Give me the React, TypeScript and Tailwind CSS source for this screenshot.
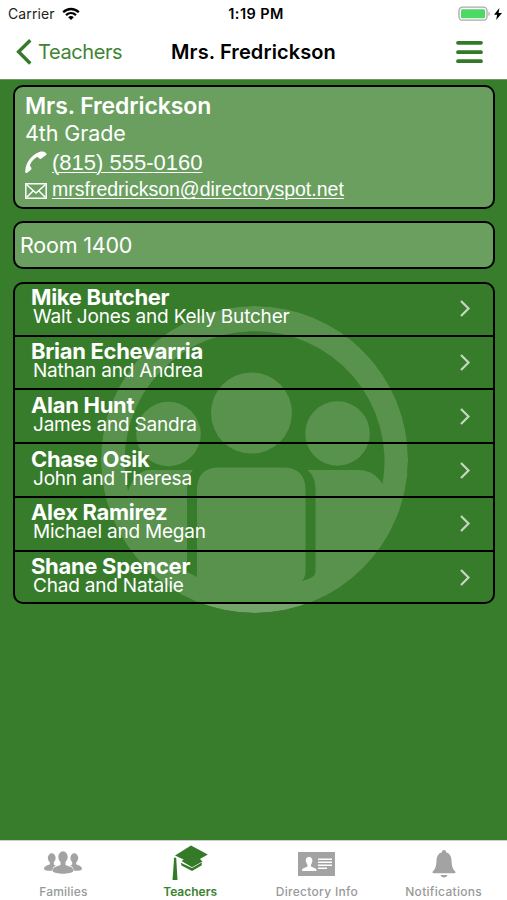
import React from "react";

const families = [
  { name: "Mike Butcher", parents: "Walt Jones and Kelly Butcher" },
  { name: "Brian Echevarria", parents: "Nathan and Andrea" },
  { name: "Alan Hunt", parents: "James and Sandra" },
  { name: "Chase Osik", parents: "John and Theresa" },
  { name: "Alex Ramirez", parents: "Michael and Megan" },
  { name: "Shane Spencer", parents: "Chad and Natalie" },
];

const StatusBar = () => (
  <div className="flex h-[27px] items-center pl-2 pr-[5px] text-[14px] text-black">
    <div className="flex flex-1 items-center gap-[7px]">
      <span className="text-[#222] tracking-[0.1px]">Carrier</span>
      <svg width="18" height="14" viewBox="0 0 18 14" fill="none" stroke="#000" strokeWidth="2.3">
        <path d="M1.2 5.2C5.6 .9 12.4 .9 16.8 5.2" />
        <path d="M4 8.2C6.9 5.5 11.1 5.5 14 8.2" />
        <path d="M6.2 10.2C7.8 8.7 10.2 8.7 11.8 10.2L9 13z" fill="#000" stroke="none" />
      </svg>
    </div>
    <span className="ml-[2px] text-[14.5px] font-semibold tracking-[0.4px]">1:19 PM</span>
    <div className="flex flex-1 items-center justify-end gap-[3px]">
      <svg width="33" height="16" viewBox="0 0 33 16">
        <rect x="1" y="1.2" width="28" height="13" rx="3.5" fill="#fff" stroke="#aaa" strokeWidth="1.3" />
        <rect x="3" y="3.2" width="24" height="9" rx="1.2" fill="#4cd964" />
        <path d="M30.5 5.4c1.7.6 1.7 4 0 4.6z" fill="#aaa" />
      </svg>
      <svg width="8" height="12" viewBox="0 0 8 12">
        <path d="M5.4 0 0 6.8h3.1L2.2 12 8 4.9H4.6z" fill="#000" />
      </svg>
    </div>
  </div>
);

const NavBar = () => (
  <div className="flex h-[52px] items-center px-4 pb-[2px]">
    <div className="flex flex-1 items-center gap-[6px]">
      <svg width="16" height="26" viewBox="0 0 16 26" fill="none" stroke="#357a29" strokeWidth="3.4">
        <path d="M14.3 1.3 2.6 12.8 14.3 24.5" />
      </svg>
      <span className="text-[20px] text-[#3f8433] tracking-[-0.4px]">Teachers</span>
    </div>
    <h1 className="text-[20px] font-semibold text-black tracking-[0.1px]">Mrs. Fredrickson</h1>
    <div className="flex flex-1 justify-end">
      <svg className="mr-2" width="27" height="24" viewBox="0 0 27 24" stroke="#347928" strokeWidth="3.8" strokeLinecap="round">
        <path d="M2 2.8h23M2 12.2h23M2 21.2h23" />
      </svg>
    </div>
  </div>
);

// Round logo shown faintly behind the list
const Watermark = () => (
  <svg className="absolute left-[101px] top-[226px]" width="307" height="307" viewBox="101 306 307 307">
    <mask id="people">
      <circle cx="254.5" cy="459.5" r="153.5" fill="#fff" />
      <path
        d="M128 491A130 130 0 1 1 382.5 484Q374 470 358 470H307.5C313 475 315.5 480 315.5 490V572Q315.5 578 302 581Q305.5 577 305.5 572V490Q305.5 467.5 283 467.5H219Q197 467.5 197 490V577L187 572V490Q187 475 193 470H150Q136 470 128 491Z"
        fill="#000"
      />
      <circle cx="251.5" cy="413" r="40.5" fill="#fff" />
      <circle cx="168.5" cy="434" r="32.3" fill="#fff" />
      <circle cx="337.5" cy="433.5" r="32.3" fill="#fff" />
    </mask>
    <circle cx="254.5" cy="459.5" r="153.5" fill="#fff" fillOpacity=".3" mask="url(#people)" />
  </svg>
);

const TeacherCard = () => (
  <section className="h-[124px] rounded-[10px] border-2 border-black bg-[#6a9f60] pl-[10px] pt-[5px]">
    <h2 className="h-7 text-[23px] leading-7 font-semibold tracking-[-0.1px]">Mrs. Fredrickson</h2>
    <p className="h-7 text-[21.5px] leading-[27px] tracking-[-0.1px]">4th Grade</p>
    <div className="flex h-[29px] items-center gap-[5px]">
      <svg width="22" height="23" viewBox="0 0 22 23" fill="#fff">
        <path d="M15 .8C9 2.5 .5 10 .2 20.5c0 1.2.8 1.7 1.7 1.5l4-3.2c.8-.8.7-1.7.2-2.4l-1.3-2C6.5 10 9 7.5 12.5 5.7l1.7 1.8c.7.6 1.5.7 2.3.1l4.600-3.500c.7-.7.6-1.600-.2-2.200C19.500.9 17 .3 15 .8z" />
      </svg>
      <a className="font-['Liberation_Sans',sans-serif] text-[22px] leading-7 underline decoration-1 underline-offset-2">(815) 555-0160</a>
    </div>
    <div className="flex h-6 items-center gap-[5px]">
      <svg className="mt-1" width="22" height="16" viewBox="0 0 22 16" fill="none" stroke="#fff" strokeWidth="1.5">
        <path d="M.8.8h20.4v14.4H.8zM2 2l9 8 9-8M2 14l6-6M20 14l-6-6" />
      </svg>
      <a className="font-['Liberation_Sans',sans-serif] text-[19.5px] leading-6 underline decoration-1 underline-offset-2">mrsfredrickson@directoryspot.net</a>
    </div>
  </section>
);

const FamilyList = () => (
  <ul className="mt-[13px] h-[322px] overflow-hidden rounded-[10px] border-2 border-black bg-[#387d2b]/45">
    {families.map((f) => (
      <li key={f.name} className="flex h-[53.8px] items-start justify-between border-t-2 border-black pl-4 pr-[22px] pt-[1.5px] first:h-[50.5px] first:border-t-0 first:pt-0">
        <div className="pt-[3px]">
          <p className="text-[22px] leading-[21px] font-bold tracking-[-0.3px]">{f.name}</p>
          <p className="pl-0.5 text-[19px] leading-[17px] tracking-[-0.2px]">{f.parents}</p>
        </div>
        <svg className="mt-4" width="12" height="17" viewBox="0 0 12 17" fill="none" stroke="#c3d8bf" strokeWidth="2.2">
          <path d="m2 1 7.5 7.5L2 16" />
        </svg>
      </li>
    ))}
  </ul>
);

const TabBar = () => (
  <nav className="grid h-[60px] grid-cols-4 border-t border-[#ccc] bg-white text-[12px] font-medium text-[#999]">
    <div className="flex flex-col items-center">
      <svg className="mt-[10px]" width="40" height="24" viewBox="0 0 40 24" fill="#a3a3a3">
        <ellipse cx="8.7" cy="7" rx="3.9" ry="4.7" />
        <ellipse cx="31.3" cy="7" rx="3.9" ry="4.7" />
        <path d="M6.8 10h4v3.5l2 1.2c-2.5 1-3.3 2.3-3.5 4.8-3 .5-8.3.3-8.3-1.5 0-2.8 3-3.5 5.8-4.8zM33.2 10h-4v3.5l-2 1.2c2.5 1 3.3 2.3 3.5 4.8 3 .5 8.3.3 8.3-1.5 0-2.8-3-3.5-5.8-4.8z" />
        <ellipse cx="20" cy="6" rx="4.7" ry="5.7" />
        <path d="M17.5 10h5v4c3.5 1.5 8 1.7 8 6-2.5 3.6-18.5 3.6-21 0 0-4.3 4.5-4.5 8-6z" />
      </svg>
      <span className="mt-[9px] leading-4 tracking-[0.2px]">Families</span>
    </div>
    <div className="flex flex-col items-center font-semibold text-[#3c8130]">
      <svg className="mt-1" width="36" height="37" viewBox="0 0 36 37" fill="#347a28">
        <path d="M19 .5 35.8 9.5 20 18.5 3 10.5zM9.5 16l4-2.5L20 17l7-4 3.5 3.5L20 22.3z" />
        <path d="M8.8 17.8 20 23 29.8 17.5v2.8L20 26 9.5 20.5z" />
        <path d="M3 12.5c1.2 0 1.7 1 1.3 2L5.5 35H.5L2 14.5c-.5-1 0-2 1-2z" />
      </svg>
      <span className="mt-[2px] leading-4">Teachers</span>
    </div>
    <div className="flex flex-col items-center">
      <svg className="mt-[11px]" width="37" height="24" viewBox="0 0 37 24">
        <path fill="#a3a3a3" d="M0 0h37v24H0z" />
        <path fill="#fff" d="M11 5c-3 0-3.500 2.500-3 5l1.500 3v1.500L5 16.500c-1 .5-1 1.500-1 2.500h14.500c0-1 0-2-1-2.500L13 14.500V13l1.200-3c.5-2.500-.2-5-3.200-5z" />
        <path stroke="#fff" strokeWidth="1.6" d="M20 7.300h14M20 10.300h14M20 13.300h14M20 16.300h9" />
      </svg>
      <span className="mt-[8px] leading-4 tracking-[0.3px]">Directory Info</span>
    </div>
    <div className="flex flex-col items-center">
      <svg className="mt-[9px]" width="24" height="28" viewBox="0 0 24 28" fill="#a3a3a3">
        <path d="M12 0c1.300 0 2 .9 2 2.200 3.700 1 5.300 4 5.500 8 .2 6 1.200 8.800 3.700 11.200.8.900.5 1.800-.7 1.800h-21c-1.200 0-1.500-.9-.7-1.800 2.500-2.400 3.500-5.200 3.700-11.200.2-4 1.800-7 5.500-8C10 .9 10.700 0 12 0zM8.500 25h7c-.5 3.300-6.500 3.300-7 0z" />
      </svg>
      <span className="mt-[6px] leading-4 tracking-[0.3px]">Notifications</span>
    </div>
  </nav>
);

const App = () => {
  return (
    <div className="flex h-[900px] w-[507px] flex-col overflow-hidden bg-white font-['Inter',sans-serif]">
      <header>
        <StatusBar />
        <NavBar />
      </header>
      <main className="relative flex-1 border-t border-[#6d9866] bg-[#387d2b] pl-[13px] pr-3 pt-[5px] text-white">
        <Watermark />
        <div className="relative">
          <TeacherCard />
          <section className="mt-3 flex h-12 items-center rounded-[10px] border-2 border-black bg-[#6a9f60] pl-[5px]">
            <span className="text-[21.5px] tracking-[-0.2px]">Room 1400</span>
          </section>
          <FamilyList />
        </div>
      </main>
      <TabBar />
    </div>
  );
};

export default App;
